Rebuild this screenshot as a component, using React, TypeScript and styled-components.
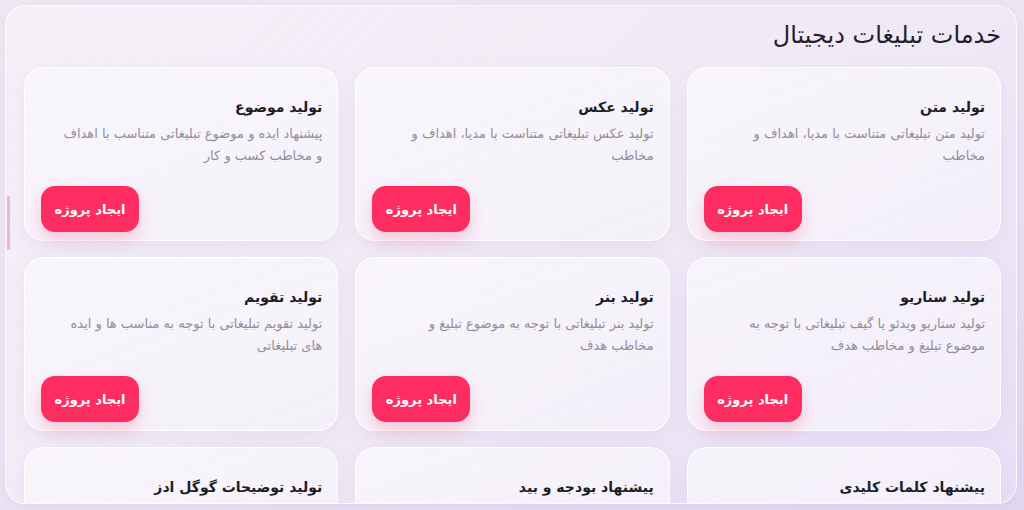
import styled, { createGlobalStyle } from "styled-components";

interface Service {
  title: string;
  description?: string;
}

// line breaks follow the layout of the design
const services: Service[] = [
  { title: "تولید متن", description: "تولید متن تبلیغاتی متناست با مدیا، اهداف و\nمخاطب" },
  { title: "تولید عکس", description: "تولید عکس تبلیغاتی متناست با مدیا، اهداف و\nمخاطب" },
  { title: "تولید موضوع", description: "پیشنهاد ایده و موضوع تبلیغاتی متناسب با اهداف\nو مخاطب کسب و کار" },
  { title: "تولید سناریو", description: "تولید سناریو ویدئو یا گیف تبلیغاتی با توجه به\nموضوع تبلیغ و مخاطب هدف" },
  { title: "تولید بنر", description: "تولید بنر تبلیغاتی با توجه به موضوع تبلیغ و\nمخاطب هدف" },
  { title: "تولید تقویم", description: "تولید تقویم تبلیغاتی با توجه به مناسب ها و ایده\nهای تبلیغاتی" },
  { title: "پیشنهاد کلمات کلیدی" },
  { title: "پیشنهاد بودجه و بید" },
  { title: "تولید توضیحات گوگل ادز" },
];

export default function App() {
  return (
    <>
      <GlobalStyle />
      <Page>
        <Panel>
          <ScrollThumb />
          <Heading>خدمات تبلیغات دیجیتال</Heading>
          <Grid>
            {services.map((s) => (
              <Card key={s.title}>
                <CardTitle>{s.title}</CardTitle>
                {s.description && <CardText>{s.description}</CardText>}
                <CreateButton>ایجاد پروژه</CreateButton>
              </Card>
            ))}
          </Grid>
        </Panel>
      </Page>
    </>
  );
}

const GlobalStyle = createGlobalStyle`
  html, body {
    margin: 0;
    padding: 0;
    height: 100%;
  }
  body {
    font-family: "DejaVu Sans", "Noto Sans", sans-serif;
    background: linear-gradient(160deg, #efe7f2 0%, #ebe5f5 50%, #e2d6f2 100%);
    overflow: hidden;
  }
`;

const Page = styled.div`
  width: 1024px;
  height: 510px;
  padding: 5px 7px 6px 5px;
  box-sizing: border-box;
  direction: rtl;
`;

const Panel = styled.div`
  position: relative;
  height: 499px;
  box-sizing: border-box;
  padding: 0 15px 0 18px;
  border-radius: 20px;
  border: 1px solid rgba(255, 255, 255, 0.75);
  background: linear-gradient(
    135deg,
    rgba(246, 241, 249, 0.85) 0%,
    rgba(243, 236, 246, 0.7) 55%,
    rgba(236, 226, 247, 0.7) 100%
  );
  box-shadow: 0 2px 10px rgba(170, 150, 200, 0.15);
  overflow: hidden;
`;

const ScrollThumb = styled.div`
  position: absolute;
  left: 1px;
  top: 190px;
  width: 3px;
  height: 54px;
  border-radius: 2px;
  background: #f5b3c8;
`;

const Heading = styled.h1`
  margin: 0;
  height: 61px;
  display: flex;
  align-items: center;
  padding-bottom: 4px;
  box-sizing: border-box;
  font-size: 24px;
  font-weight: 500;
  color: #22212b;
`;

const Grid = styled.div`
  display: grid;
  grid-template-columns: repeat(3, 1fr);
  column-gap: 17px;
  row-gap: 16px;
`;

const Card = styled.div`
  height: 174px;
  box-sizing: border-box;
  padding: 29px 15px 8px 16px;
  display: flex;
  flex-direction: column;
  border-radius: 20px;
  border: 1px solid rgba(255, 255, 255, 0.9);
  background: linear-gradient(
    160deg,
    rgba(250, 248, 252, 0.75) 0%,
    rgba(246, 243, 251, 0.7) 100%
  );
  box-shadow: 0 6px 18px rgba(190, 170, 215, 0.18);
`;

const CardTitle = styled.h2`
  margin: 0;
  font-size: 14px;
  font-weight: 700;
  line-height: 20px;
  color: #1e1d26;
`;

const CardText = styled.p`
  margin: 6px 0 0;
  font-size: 13px;
  line-height: 22px;
  white-space: pre;
  color: #918f9c;
`;

const CreateButton = styled.button`
  margin-top: auto;
  align-self: flex-end;
  width: 98px;
  height: 46px;
  border: none;
  border-radius: 14px;
  background: #fd2c61;
  color: #ffffff;
  font-family: "DejaVu Sans", "Noto Sans", sans-serif;
  font-size: 13px;
  font-weight: 700;
  box-shadow: 0 8px 16px rgba(253, 44, 97, 0.22);
  cursor: pointer;
`;
